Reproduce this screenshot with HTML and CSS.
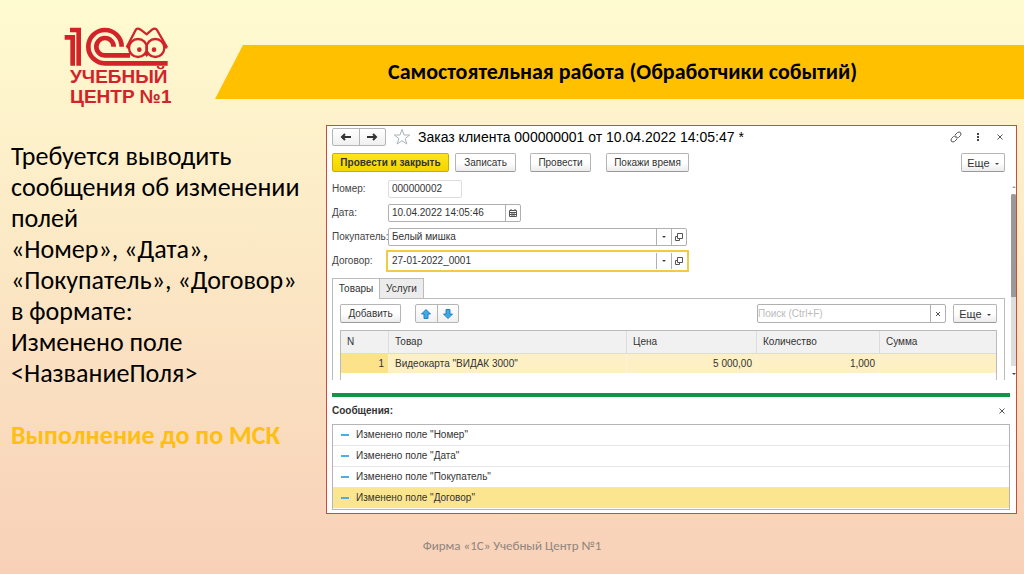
FILE: index.html
```
<!DOCTYPE html>
<html lang="ru">
    <head>
        <meta charset="UTF-8">
        <meta name="viewport" content="width=device-width, initial-scale=1.0">
        <title>Самостоятельная работа (Обработчики событий)</title>
        <link rel="stylesheet" href="styles.css">
    </head>
    <body>
        <header class="top">
            <div class="logo">
                <svg viewBox="42 36 315 120" width="105" height="40" fill="none" stroke="#d2232a" stroke-width="14">
                    <path d="M60 45H86V152M44 67H68V152"/>
                    <path d="M215 95A50 50 0 1 0 165 145H353"/>
                    <path d="M191 95A26 26 0 1 0 165 121H240"/>
                    <g stroke-width="7">
                        <circle cx="264" cy="99" r="27"/>
                        <circle cx="316" cy="99" r="27"/>
                        <path d="M230 97L257 45Q261 37 272 44L290 58L306 44Q316 37 321 45L351 97"/>
                        <path d="M230 97H238M342 97H352"/>
                    </g>
                    <g fill="#d2232a" stroke="none">
                        <circle cx="268" cy="104" r="7"/>
                        <circle cx="312" cy="104" r="7"/>
                        <path d="M283 118L290 112L297 118L290 126Z"/>
                    </g>
                </svg>
                <span>УЧЕБНЫЙ</span>
                <span>ЦЕНТР №1</span>
            </div>
            <h1>Самостоятельная работа (Обработчики событий)</h1>
        </header>

        <main>
            <section class="task">
                <p>Требуется выводить сообщения об изменении полей<br>
                «Номер», «Дата»,<br>
                «Покупатель», «Договор»<br>
                в формате:<br>
                Изменено поле<br>
                &lt;НазваниеПоля&gt;</p>
                <p class="deadline">Выполнение до по МСК</p>
            </section>

            <section class="window">
                <div class="title-bar">
                    <div class="btn-group">
                        <button type="button" aria-label="Назад">
                            <svg viewBox="0 0 12 8" width="12" height="8"><path d="M11 4H2M5 1L2 4L5 7" fill="none" stroke="#333" stroke-width="2"/></svg>
                        </button>
                        <button type="button" aria-label="Вперед">
                            <svg viewBox="0 0 12 8" width="12" height="8"><path d="M1 4H10M7 1L10 4L7 7" fill="none" stroke="#333" stroke-width="2"/></svg>
                        </button>
                    </div>
                    <svg class="star" viewBox="0 0 18 18" width="18" height="18"><path d="M9 1.5L11 7H16.700L12.200 10.500L13.800 16L9 12.700L4.200 16L5.800 10.500L1.300 7H7Z" fill="none" stroke="#aab2b8"/></svg>
                    <h2>Заказ клиента 000000001 от 10.04.2022 14:05:47 *</h2>
                    <div class="window-tools">
                        <button type="button" class="icon" aria-label="Ссылка">
                            <svg viewBox="0 0 12 12" width="12" height="12" fill="none" stroke="#555"><path d="M5 4L7.500 1.500Q9 0.500 10.500 1.500Q11.500 3 10.500 4.500L8.500 6.500Q7 7.500 5.500 6.500M7 8L4.500 10.500Q3 11.500 1.500 10.500Q0.500 9 1.500 7.500L3.500 5.500Q5 4.500 6.500 5.500"/></svg>
                        </button>
                        <button type="button" class="icon" aria-label="Меню">
                            <svg viewBox="0 0 12 12" width="12" height="12" fill="#444"><path d="M5 2h2v2H5zM5 5h2v2H5zM5 8h2v2H5z"/></svg>
                        </button>
                        <button type="button" class="icon" aria-label="Закрыть">
                            <svg viewBox="0 0 12 12" width="12" height="12"><path d="M3.500 3.500L8.500 8.500M8.500 3.500L3.500 8.500" stroke="#555"/></svg>
                        </button>
                    </div>
                </div>

                <div class="commands">
                    <button type="button" class="btn primary">Провести и закрыть</button>
                    <button type="button" class="btn save">Записать</button>
                    <button type="button" class="btn">Провести</button>
                    <button type="button" class="btn wide">Покажи время</button>
                    <button type="button" class="btn more">Еще <i class="caret"></i></button>
                </div>

                <div class="scroll-area">
                    <form class="order">
                        <div class="field">
                            <label for="number">Номер:</label>
                            <div class="box number"><input type="text" id="number" value="000000002"></div>
                        </div>
                        <div class="field">
                            <label for="date">Дата:</label>
                            <div class="box date">
                                <input type="text" id="date" value="10.04.2022 14:05:46">
                                <button type="button" aria-label="Календарь">
                                    <svg viewBox="0 0 8 8" width="8" height="8"><path d="M0.500 1.500H7.500V7.500H0.500ZM2 0V2M6 0V2M0.500 3.500H7.500M0.500 5.500H7.500M3 3V7M5 3V7" fill="none" stroke="#555"/></svg>
                                </button>
                            </div>
                        </div>
                        <div class="field">
                            <label for="customer">Покупатель:</label>
                            <div class="box">
                                <input type="text" id="customer" value="Белый мишка">
                                <button type="button" aria-label="Выбрать"><i class="caret"></i></button>
                                <button type="button" aria-label="Открыть">
                                    <svg viewBox="0 0 8 8" width="8" height="8"><path d="M2.500 0.500H7.500V5.500H2.500ZM2 3.500H0.500V7.500H4.500V6" fill="none" stroke="#555"/></svg>
                                </button>
                            </div>
                        </div>
                        <div class="field">
                            <label for="contract">Договор:</label>
                            <div class="box active">
                                <input type="text" id="contract" value="27-01-2022_0001">
                                <button type="button" aria-label="Выбрать"><i class="caret"></i></button>
                                <button type="button" aria-label="Открыть">
                                    <svg viewBox="0 0 8 8" width="8" height="8"><path d="M2.500 0.500H7.500V5.500H2.500ZM2 3.500H0.500V7.500H4.500V6" fill="none" stroke="#555"/></svg>
                                </button>
                            </div>
                        </div>

                        <div class="tabs">
                            <button type="button" class="current">Товары</button>
                            <button type="button">Услуги</button>
                        </div>
                        <div class="tab-page">
                            <div class="table-bar">
                                <button type="button" class="btn">Добавить</button>
                                <div class="btn-group move">
                                    <button type="button" aria-label="Вверх">
                                        <svg viewBox="0 0 10 10" width="10" height="10"><path d="M5 0.500L9.500 5H7V9.500H3V5H0.500Z" fill="#3fa9e8" stroke="#2580c0"/></svg>
                                    </button>
                                    <button type="button" aria-label="Вниз">
                                        <svg viewBox="0 0 10 10" width="10" height="10"><path d="M5 9.500L9.500 5H7V0.500H3V5H0.500Z" fill="#3fa9e8" stroke="#2580c0"/></svg>
                                    </button>
                                </div>
                                <div class="box search">
                                    <input type="text" aria-label="Поиск" placeholder="Поиск (Ctrl+F)">
                                    <button type="button" aria-label="Очистить">
                                        <svg viewBox="0 0 8 8" width="8" height="8"><path d="M2 2L6 6M6 2L2 6" stroke="#555"/></svg>
                                    </button>
                                </div>
                                <button type="button" class="btn more">Еще <i class="caret"></i></button>
                            </div>
                            <table>
                                <thead>
                                    <tr>
                                        <th class="col-n">N</th>
                                        <th>Товар</th>
                                        <th class="col-price">Цена</th>
                                        <th class="col-count">Количество</th>
                                        <th class="col-sum">Сумма</th>
                                    </tr>
                                </thead>
                                <tbody>
                                    <tr>
                                        <td class="num selected">1</td>
                                        <td>Видеокарта "ВИДАК 3000"</td>
                                        <td class="num">5 000,00</td>
                                        <td class="num">1,000</td>
                                        <td></td>
                                    </tr>
                                </tbody>
                            </table>
                        </div>
                    </form>
                    <div class="scrollbar">
                        <i class="caret up"></i>
                        <div class="track"><div class="thumb"></div></div>
                        <i class="caret"></i>
                    </div>
                </div>

                <div class="messages">
                    <div class="messages-head">
                        <h3>Сообщения:</h3>
                        <button type="button" class="icon" aria-label="Закрыть сообщения">
                            <svg viewBox="0 0 12 12" width="12" height="12"><path d="M3.500 3.500L8.500 8.500M8.500 3.500L3.500 8.500" stroke="#555"/></svg>
                        </button>
                    </div>
                    <ul>
                        <li>Изменено поле "Номер"</li>
                        <li>Изменено поле "Дата"</li>
                        <li>Изменено поле "Покупатель"</li>
                        <li class="selected">Изменено поле "Договор"</li>
                    </ul>
                </div>
            </section>
        </main>

        <footer>Фирма «1С» Учебный Центр №1</footer>
    </body>
</html>
```
FILE: styles.css
```
* {
    box-sizing: border-box;
}
body {
    margin: 0;
    min-height: 100vh;
    font-family: Carlito, Lato, sans-serif;
    color: #000;
    background: linear-gradient(#fffbd0, #fbe6c4 50%, #f8d0b8);
}
h1, h2, h3, p, ul {
    margin: 0;
    padding: 0;
}
button, input {
    font: inherit;
    color: inherit;
    margin: 0;
    padding: 0;
}
svg {
    display: block;
    flex-shrink: 0;
}

/* Header */
.top {
    display: flex;
    align-items: flex-start;
    padding-top: 27px;
}
.logo {
    width: 151px;
    padding-left: 64px;
    box-sizing: content-box;
    display: flex;
    flex-direction: column;
    color: #d2232a;
    font: bold 19px/20px "Liberation Sans", Arial, sans-serif;
}
.logo span {
    padding-left: 6px;
}
h1 {
    flex: 1;
    margin-top: 18px;
    padding-left: 173px;
    font-size: 22px;
    line-height: 54px;
    background: #ffc000;
    clip-path: polygon(28px 0, 100% 0, 100% 100%, 0 100%);
}

/* Content */
main {
    display: grid;
    grid-template-columns: 315px 1fr;
    padding: 18px 7px 0 11px;
}
.task {
    padding: 16px 20px 0 0;
    font-size: 26px;
    line-height: 31px;
}
.deadline {
    margin-top: 31px;
    font-weight: bold;
    color: #fdbf12;
}

/* 1C window */
.window {
    border: 1px solid #cc4b3c;
    background: #fff;
    padding: 2px 0 3px 5px;
    font: 10px/12px "Liberation Sans", Arial, sans-serif;
    color: #333;
}
.title-bar {
    display: flex;
    align-items: center;
    height: 18px;
}
.btn-group {
    display: flex;
    width: 54px;
    height: 18px;
    border: 1px solid #b5b5b5;
    border-radius: 2px;
    background: linear-gradient(#fff, #f0f0f0);
}
.btn-group button {
    flex: 1;
    display: flex;
    align-items: center;
    justify-content: center;
    border: none;
    background: none;
}
.btn-group button + button {
    border-left: 1px solid #b5b5b5;
}
.star {
    margin: 0 7px;
}
h2 {
    font-size: 14px;
    font-weight: normal;
    color: #000;
}
.window-tools {
    display: flex;
    gap: 10px;
    margin-left: auto;
    padding-right: 10px;
}
.icon {
    border: none;
    background: none;
}
.commands {
    display: flex;
    margin: 7px 11px 8px 0;
}
.btn {
    width: 61px;
    height: 19px;
    border: 1px solid #b5b5b5;
    border-bottom-color: #999;
    border-radius: 2px;
    background: linear-gradient(#fff 50%, #ececec);
}
.primary {
    width: 117px;
    margin-right: 6px;
    border-color: #c9b000;
    background: linear-gradient(#ffe51a, #f2d500);
    font-weight: bold;
}
.save {
    margin-right: 14px;
}
.wide {
    width: 83px;
    margin-left: 15px;
}
.more {
    width: 44px;
    margin-left: auto;
    font-size: 11px;
}
.caret {
    display: inline-block;
    border: 2px solid transparent;
    border-top-color: #444;
    border-bottom: none;
    vertical-align: middle;
    margin-left: 2px;
}
.scroll-area {
    display: flex;
    justify-content: space-between;
}
.order {
    flex: 1;
    margin-right: 6px;
}
.field {
    display: flex;
    align-items: center;
    margin-bottom: 6px;
}
.field label {
    width: 56px;
    white-space: nowrap;
    color: #444;
}
.box {
    display: flex;
    width: 299px;
    height: 18px;
    border: 1px solid #b0b0b0;
    border-radius: 2px;
    background: #fff;
}
.box input {
    flex: 1;
    min-width: 0;
    padding: 0 3px;
    border: none;
    outline: none;
    background: none;
}
.box button {
    display: flex;
    align-items: center;
    justify-content: center;
    width: 15px;
    border: none;
    border-left: 1px solid #b0b0b0;
    background: none;
}
.box .caret {
    margin: 0;
}
.number {
    width: 74px;
    border-color: #ddd;
}
.date {
    width: 133px;
}
.active {
    border-color: #fff;
    border-radius: 0;
    box-shadow: 0 0 0 2px #f0cb45;
}
.tabs {
    display: flex;
    margin-top: 8px;
}
.tabs button {
    width: 45px;
    height: 20px;
    border: 1px solid #bbb;
    border-bottom: none;
    background: #ececec;
}
.tabs .current {
    width: 47px;
    border-right: none;
    background: #fff;
    /* hides the page border under the open tab */
    margin-bottom: -1px;
    height: 21px;
    position: relative;
}
.tab-page {
    border: 1px solid #bbb;
    border-bottom: none;
    padding: 5px 7px 0;
}
.table-bar {
    display: flex;
    margin-bottom: 7px;
}
.move {
    width: 44px;
    height: 19px;
    margin-left: 14px;
}
.search {
    width: 189px;
    height: 19px;
    margin-left: auto;
}
.search input {
    padding: 0;
}
.search input::placeholder {
    color: #bbb;
}
.search + .more {
    margin-left: 7px;
}
table {
    width: 100%;
    table-layout: fixed;
    border-collapse: separate;
    border-spacing: 0;
    border: 1px solid #bbb;
    border-bottom: none;
    padding-bottom: 7px;
}
th {
    height: 23px;
    padding: 0 6px;
    border-right: 1px solid #ddd;
    border-bottom: 1px solid #ddd;
    background: #f1f1f1;
    text-align: left;
    font-weight: normal;
}
td {
    height: 19px;
    padding: 0 6px;
    border-right: 1px solid #fdf3d4;
    background: #fdf0c4;
}
td.num {
    padding-right: 4px;
    text-align: right;
}
td.selected {
    background: #fbe28b;
}
th:last-child, td:last-child {
    border-right: none;
}
.col-n {
    width: 48px;
}
.col-price {
    width: 130px;
}
.col-count {
    width: 123px;
}
.col-sum {
    width: 116px;
}
.scrollbar {
    display: flex;
    flex-direction: column;
    align-items: center;
    width: 5px;
    padding: 6px 0 5px;
}
.scrollbar .caret {
    margin: 0;
}
.scrollbar .up {
    transform: rotate(180deg);
    opacity: 0.5;
}
.track {
    flex: 1;
    width: 5px;
    margin: 6px 0 7px;
    background: #ddd;
}
.thumb {
    height: 60%;
    background: #999;
    border-radius: 2px 2px 0 0;
}

/* Messages */
.messages {
    margin: 13px 6px 0 0;
    border-top: 4px solid #129547;
}
.messages-head {
    display: flex;
    justify-content: space-between;
    align-items: center;
    height: 27px;
    padding-right: 2px;
}
h3 {
    font-size: 10px;
}
ul {
    list-style: none;
    border: 1px solid #b5b5b5;
    padding-bottom: 1px;
}
li {
    display: flex;
    align-items: center;
    height: 21px;
    padding-left: 8px;
    border-bottom: 1px solid #e5e5e5;
}
li::before {
    content: "";
    width: 8px;
    height: 2px;
    margin-right: 7px;
    background: #4aaee0;
}
li.selected {
    height: 20px;
    border-bottom: none;
    background: #fce58f;
}

footer {
    padding: 24px 0 20px;
    text-align: center;
    font-size: 13px;
    line-height: 16px;
    color: #8f8780;
}
```
